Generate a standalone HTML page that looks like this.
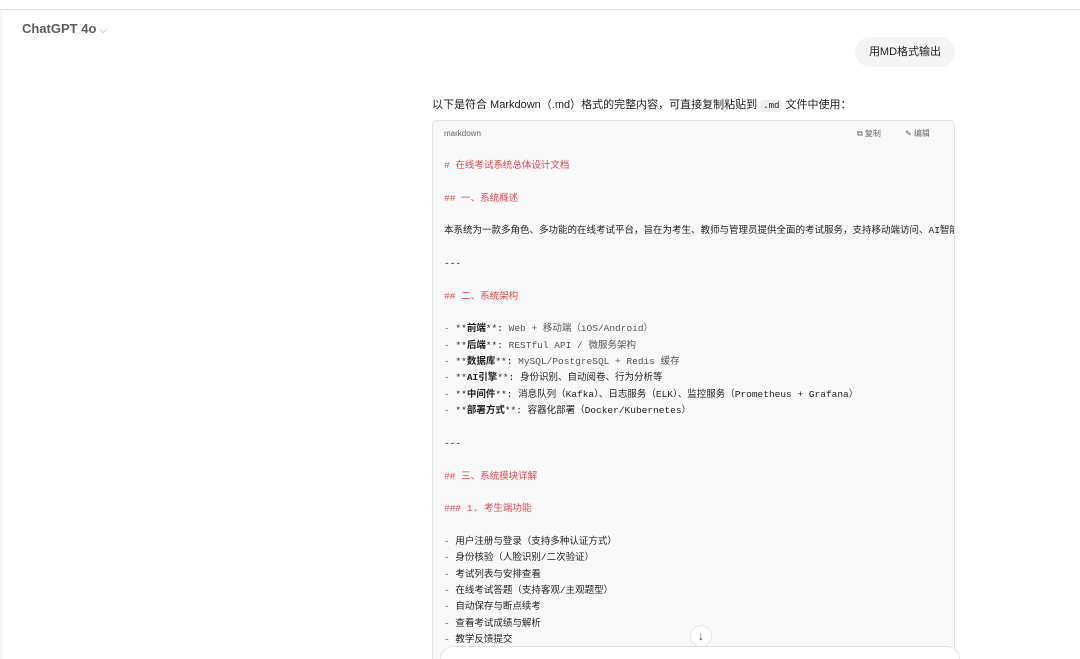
<!DOCTYPE html>
<html><head><meta charset="utf-8"><style>
html,body{margin:0;padding:0;width:1080px;height:659px;overflow:hidden;background:#fff;font-family:"Liberation Sans","Noto Sans CJK SC",sans-serif;position:relative}
.top{position:absolute;left:0;top:9px;width:1080px;height:1px;background:#e5e5e5}
.side{position:absolute;left:0;top:10px;width:3px;height:649px;background:#f5f5f5}
.title{position:absolute;left:22px;top:21px;font-size:13px;font-weight:bold;color:#5d5d5d}
.title span{font-weight:normal;font-size:10px;color:#999;margin-left:3px}
.bubble{position:absolute;left:855px;top:37px;width:100px;height:30px;border-radius:15px;background:#f4f4f4;font-size:11px;color:#222;text-align:center;line-height:30px}
.intro{position:absolute;left:432px;top:97px;font-size:11px;color:#222;line-height:16px}
.intro code{font-family:"Liberation Mono",monospace;font-size:9px;background:#ececec;padding:1px 3px;border-radius:3px}
.code{position:absolute;left:432px;top:120px;width:521px;height:539px;background:#f9f9f9;border:1px solid #e3e3e3;border-bottom:none;border-radius:5px 5px 0 0;overflow:hidden}
.hdr{position:absolute;left:11px;top:8px;font-size:8px;color:#666}
.act{position:absolute;top:7px;font-size:8px;color:#666}
.body{position:absolute;left:11px;top:37px;font-family:"Liberation Mono","Noto Sans CJK SC",monospace;font-size:9.5px;line-height:16.35px;color:#222;white-space:pre}
.r{color:#e5484d}.b{color:#4a6fb5}.m{color:#555}
.inp{position:absolute;left:440px;top:646px;width:520px;height:13px;border:1px solid #e3e3e3;border-bottom:none;border-radius:16px 16px 0 0;background:#fff;box-sizing:border-box}
.dn{position:absolute;left:690px;top:625px;width:22px;height:22px;border-radius:50%;border:1px solid #e3e3e3;background:#fff;text-align:center;line-height:20px;font-size:12px;color:#333;box-sizing:border-box}
</style></head><body>
<div class="top"></div><div class="side"></div>
<div class="title">ChatGPT 4o<span>⌵</span></div>
<div class="bubble">用MD格式输出</div>
<div class="intro">以下是符合 Markdown（.md）格式的完整内容，可直接复制粘贴到 <code>.md</code> 文件中使用：</div>
<div class="code">
<div class="hdr">markdown</div>
<div class="act" style="left:424px">⧉ 复制</div>
<div class="act" style="left:472px">✎ 编辑</div>
<div class="body"><span class="r"># 在线考试系统总体设计文档</span>

<span class="r">## 一、系统概述</span>

本系统为一款多角色、多功能的在线考试平台，旨在为考生、教师与管理员提供全面的考试服务，支持移动端访问、AI智能

---

<span class="r">## 二、系统架构</span>

<span class="b">-</span> **<b>前端</b>**: <span class="m">Web + 移动端（iOS/Android）</span>
<span class="b">-</span> **<b>后端</b>**: <span class="m">RESTful API / 微服务架构</span>
<span class="b">-</span> **<b>数据库</b>**: <span class="m">MySQL/PostgreSQL + Redis 缓存</span>
<span class="b">-</span> **<b>AI引擎</b>**: 身份识别、自动阅卷、行为分析等
<span class="b">-</span> **<b>中间件</b>**: 消息队列（Kafka）、日志服务（ELK）、监控服务（Prometheus + Grafana）
<span class="b">-</span> **<b>部署方式</b>**: 容器化部署（Docker/Kubernetes）

---

<span class="r">## 三、系统模块详解</span>

<span class="r">### 1. 考生端功能</span>

<span class="b">-</span> 用户注册与登录（支持多种认证方式）
<span class="b">-</span> 身份核验（人脸识别/二次验证）
<span class="b">-</span> 考试列表与安排查看
<span class="b">-</span> 在线考试答题（支持客观/主观题型）
<span class="b">-</span> 自动保存与断点续考
<span class="b">-</span> 查看考试成绩与解析
<span class="b">-</span> 教学反馈提交</div>
</div>
<div class="inp"></div>
<div class="dn">↓</div>
</body></html>
